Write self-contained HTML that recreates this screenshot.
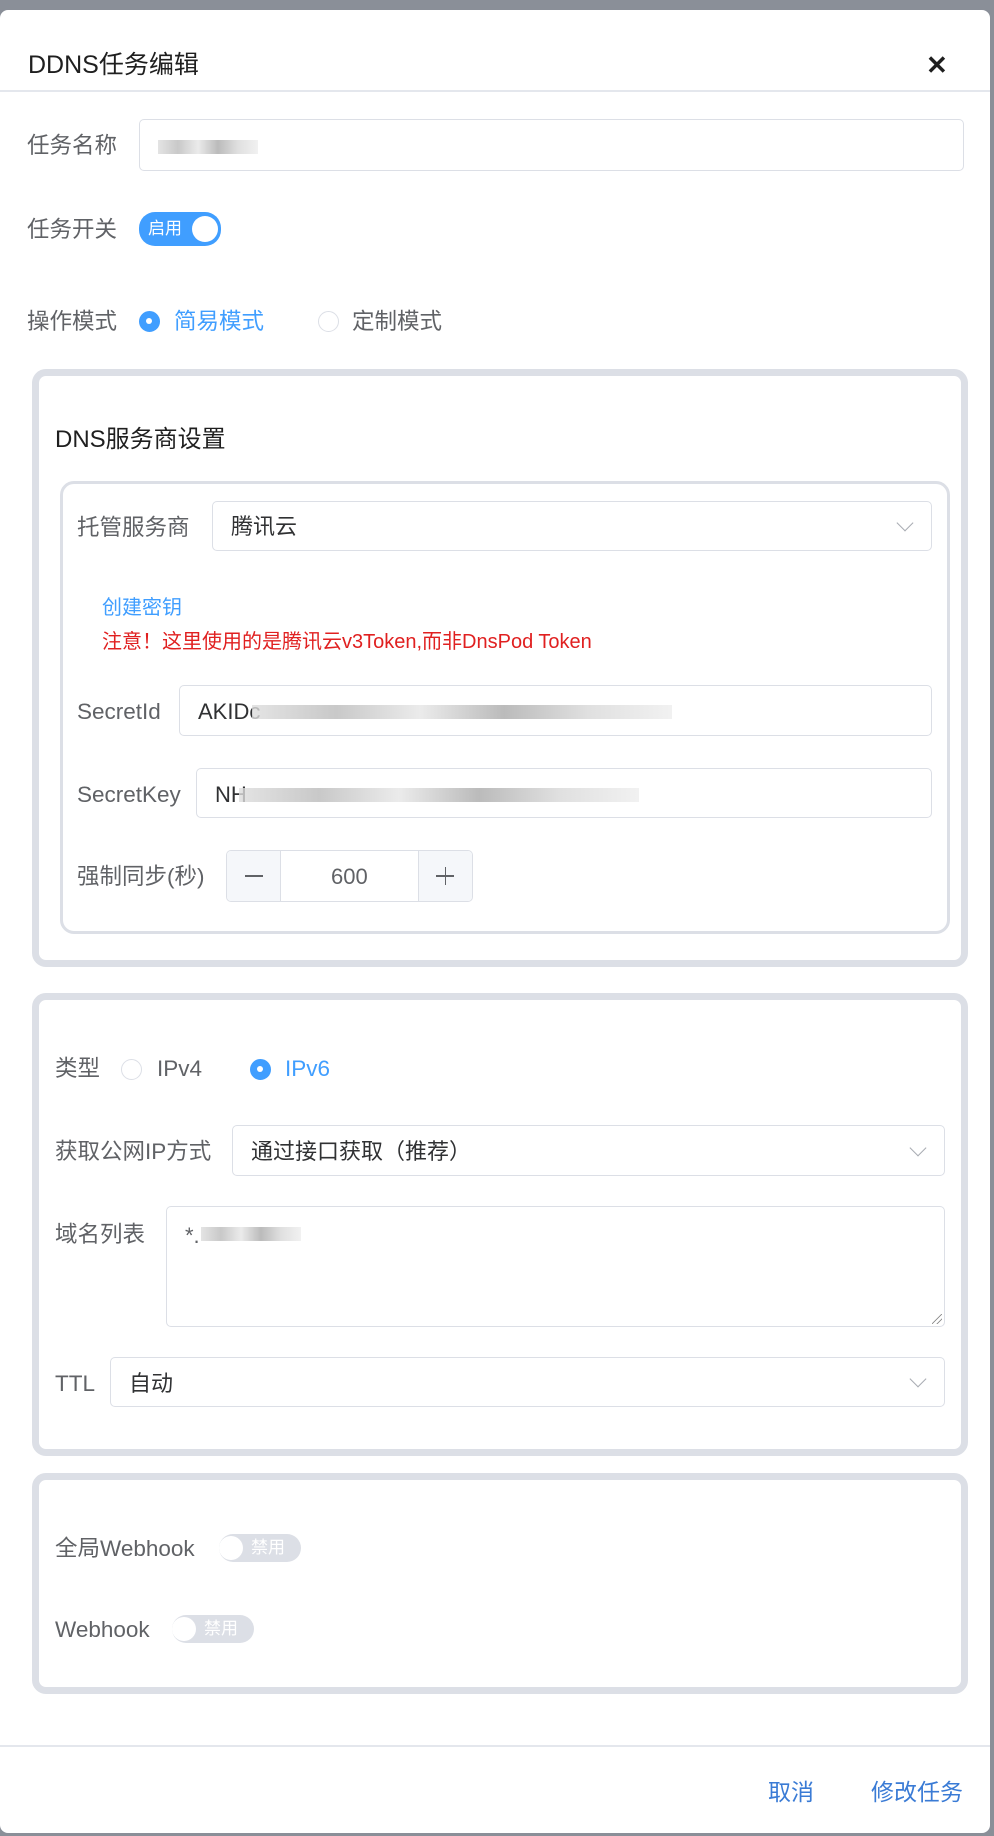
<!DOCTYPE html>
<html><head><meta charset="utf-8"><style>
*{box-sizing:border-box;margin:0;padding:0}
body{width:994px;height:1836px;background:#8a8f98;position:relative;overflow:hidden;font-family:"Liberation Sans","Noto Sans CJK SC",sans-serif;color:#606266}
.dlg{position:absolute;left:0;top:10px;width:990px;height:1823px;background:#fff;border-radius:8px}
.a{position:absolute;white-space:nowrap;line-height:1}
.lbl{font-size:22.5px;color:#606266;line-height:1}
.inp{position:absolute;border:1.5px solid #dcdfe6;border-radius:5px;background:#fff}
.card{position:absolute;border:7px solid #dcdfe6;border-radius:14px;background:#fff}
.card2{position:absolute;border:3px solid #dcdfe6;border-radius:14px;background:#fff}
.txt{font-size:22px;color:#303133;line-height:1}
.chev{position:absolute;right:20px;top:50%;width:12px;height:12px;border-right:1.5px solid #a8abb2;border-bottom:1.5px solid #a8abb2;transform:translateY(-75%) rotate(45deg)}
.blur{position:absolute;background:linear-gradient(90deg,#ddd,#bbb 20%,#e6e6e6 40%,#aaa 60%,#d8d8d8 80%,#eee);opacity:.8;height:14px}
.sw{position:absolute;border-radius:16px;font-size:17px;line-height:1}
.knob{position:absolute;width:24px;height:24px;border-radius:50%;background:#fff;top:2px}
.radio{position:absolute;width:21px;height:21px;border-radius:50%;border:1.5px solid #dcdfe6;background:#fff}
.radio.on{background:#409eff;border-color:#409eff}
.radio.on::after{content:"";position:absolute;left:6px;top:6px;width:6px;height:6px;border-radius:50%;background:#fff}
</style></head><body>
<div class="dlg">
<div class="a" style="left:28px;top:43px;font-size:25px;color:#1f1f1f">DDNS任务编辑</div>
<div class="a" style="left:926px;top:42px;font-size:26px;color:#1f1f1f;font-weight:bold">✕</div>
<div class="a" style="left:0;top:80px;width:990px;height:2px;background:#e4e7ed"></div>

<div class="a lbl" style="left:27px;top:125px">任务名称</div>
<div class="inp" style="left:139px;top:109px;width:825px;height:52px"><div class="blur" style="left:18px;top:20px;width:100px"></div></div>

<div class="a lbl" style="left:27px;top:209px">任务开关</div>
<div class="sw" style="left:139px;top:202px;width:82px;height:34px;background:#409eff;color:#fff"><span class="a" style="left:9px;top:8px">启用</span><div class="knob" style="right:3px;top:4px;width:26px;height:26px"></div></div>

<div class="a lbl" style="left:27px;top:301px">操作模式</div>
<div class="radio on" style="left:139px;top:301px"></div>
<div class="a" style="left:174px;top:301px;font-size:22.5px;color:#409eff">简易模式</div>
<div class="radio" style="left:318px;top:301px"></div>
<div class="a lbl" style="left:352px;top:301px">定制模式</div>

<div class="card" style="left:32px;top:359px;width:936px;height:598px"></div>
<div class="a" style="left:55px;top:418px;font-size:24px;color:#1f1f1f">DNS服务商设置</div>
<div class="card2" style="left:60px;top:471px;width:890px;height:453px"></div>
<div class="a lbl" style="left:77px;top:507px">托管服务商</div>
<div class="inp" style="left:212px;top:491px;width:720px;height:50px"><span class="a txt" style="left:18px;top:14px">腾讯云</span><div class="chev"></div></div>
<div class="a" style="left:102px;top:588px;font-size:20px;color:#409eff">创建密钥</div>
<div class="a" style="left:102px;top:622px;font-size:20px;color:#e02020">注意！这里使用的是腾讯云v3Token,而非DnsPod Token</div>

<div class="a lbl" style="left:77px;top:691px">SecretId</div>
<div class="inp" style="left:179px;top:675px;width:753px;height:51px"><span class="a txt" style="left:18px;top:15px">AKIDc</span><div class="blur" style="left:72px;top:19px;width:420px"></div></div>
<div class="a lbl" style="left:77px;top:774px">SecretKey</div>
<div class="inp" style="left:196px;top:758px;width:736px;height:50px"><span class="a txt" style="left:18px;top:15px">NH</span><div class="blur" style="left:42px;top:19px;width:400px"></div></div>

<div class="a lbl" style="left:77px;top:856px">强制同步(秒)</div>
<div class="inp" style="left:226px;top:840px;width:247px;height:52px;overflow:hidden">
<div class="a" style="left:0;top:0;width:54px;height:100%;background:#f5f7fa;border-right:1.5px solid #dcdfe6"></div>
<div class="a" style="right:0;top:0;width:54px;height:100%;background:#f5f7fa;border-left:1.5px solid #dcdfe6"></div>
<div class="a" style="left:18px;top:24px;width:18px;height:1.5px;background:#606266"></div>
<div class="a" style="right:18px;top:24px;width:18px;height:1.5px;background:#606266"></div>
<div class="a" style="right:26px;top:16px;width:1.5px;height:18px;background:#606266"></div>
<div class="a txt" style="left:104px;top:15px;color:#606266">600</div>
</div>

<div class="card" style="left:32px;top:983px;width:936px;height:463px"></div>
<div class="a lbl" style="left:55px;top:1048px">类型</div>
<div class="radio" style="left:121px;top:1049px"></div>
<div class="a lbl" style="left:157px;top:1048px">IPv4</div>
<div class="radio on" style="left:250px;top:1049px"></div>
<div class="a" style="left:285px;top:1048px;font-size:22.5px;color:#409eff">IPv6</div>
<div class="a lbl" style="left:55px;top:1131px">获取公网IP方式</div>
<div class="inp" style="left:232px;top:1115px;width:713px;height:51px"><span class="a txt" style="left:18px;top:15px">通过接口获取（推荐）</span><div class="chev"></div></div>
<div class="a lbl" style="left:55px;top:1214px">域名列表</div>
<div class="inp" style="left:166px;top:1196px;width:779px;height:121px"><span class="a txt" style="left:18px;top:18px;color:#606266">*.</span><div class="blur" style="left:34px;top:20px;width:100px"></div>
<div class="a" style="right:2px;bottom:2px;width:10px;height:10px;background:linear-gradient(135deg,transparent 45%,#888 46%,#888 52%,transparent 53%,transparent 70%,#888 71%,#888 77%,transparent 78%)"></div></div>
<div class="a lbl" style="left:55px;top:1363px">TTL</div>
<div class="inp" style="left:110px;top:1347px;width:835px;height:50px"><span class="a txt" style="left:18px;top:15px">自动</span><div class="chev"></div></div>

<div class="card" style="left:32px;top:1463px;width:936px;height:221px"></div>
<div class="a lbl" style="left:55px;top:1528px">全局Webhook</div>
<div class="sw" style="left:219px;top:1524px;width:82px;height:28px;background:#dcdfe6;color:#fff"><div class="knob"></div><span class="a" style="left:32px;top:5px">禁用</span></div>
<div class="a lbl" style="left:55px;top:1609px">Webhook</div>
<div class="sw" style="left:172px;top:1605px;width:82px;height:28px;background:#dcdfe6;color:#fff"><div class="knob"></div><span class="a" style="left:32px;top:5px">禁用</span></div>

<div class="a" style="left:0;top:1735px;width:990px;height:2px;background:#e4e7ed"></div>
<div class="a" style="left:768px;top:1771px;font-size:23px;color:#3a7bd5">取消</div>
<div class="a" style="left:871px;top:1771px;font-size:23px;color:#3a7bd5">修改任务</div>
</div>
</body></html>
